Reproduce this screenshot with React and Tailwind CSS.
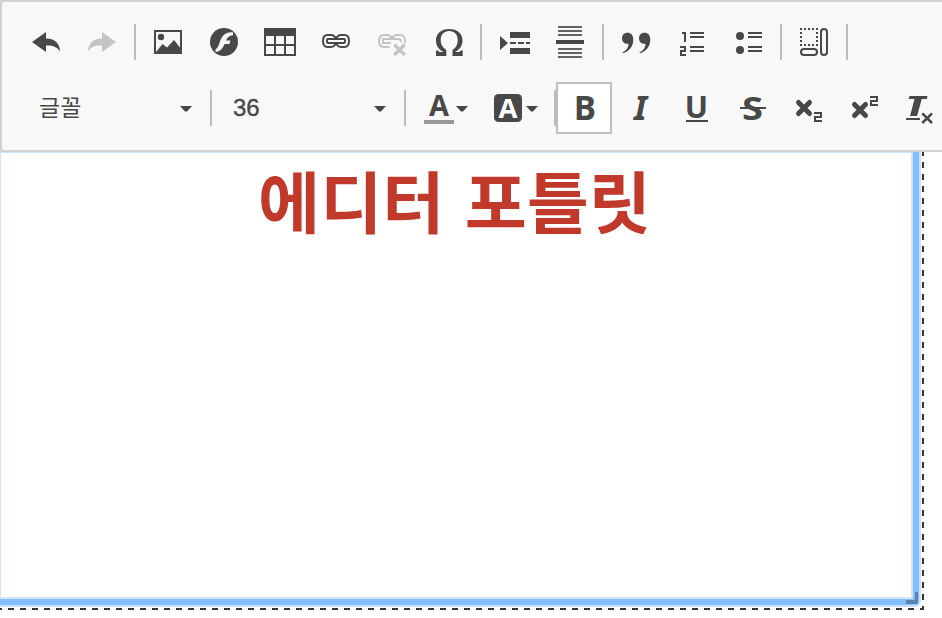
import React from "react";

const INK = "#484848";

function Icon({ x, y = 16, w = 56, className = "", label, children }) {
  return (
    <button aria-label={label} className={"block h-[52px] shrink-0 " + className}>
      <svg width={w} height="52" viewBox={`${x} ${y} ${w} 52`} fill={INK} className="block">
        {children}
      </svg>
    </button>
  );
}

function Sep() {
  return <span className="mx-1 h-9 w-0.5 shrink-0 bg-[#bcbcbc]" />;
}

function Caret({ className = "" }) {
  return (
    <svg width="12" height="6" viewBox="0 0 12 6" className={"shrink-0 " + className} fill={INK}>
      <path d="M0 0H12L7 5.5H5Z" />
    </svg>
  );
}

function Glyph({ x, y, size, italic, fill = INK, length, children }) {
  return (
    <text x={x} y={y} fontSize={size} fill={fill} fontWeight="700" fontStyle={italic ? "italic" : "normal"} textLength={length} lengthAdjust="spacingAndGlyphs" className="font-['Open_Sans','Noto_Sans',sans-serif]">
      {children}
    </text>
  );
}

function Digit({ x, y, children }) {
  return (
    <g transform={`translate(${x} ${y})`} fill="none" stroke={INK} strokeWidth="2">
      {children}
    </g>
  );
}

function TopRow() {
  return (
    <div className="flex h-[52px] items-center">
      <Icon x={18} label="Undo">
        <path d="M32 42 46 32V38.500C54 38.500 60 43 60 51.500C57 46.500 52 45 46 45.500V52Z" />
      </Icon>
      <Icon x={74} label="Redo">
        <path fill="#c4c4c4" d="M116 42 102 32V38.500C94 38.500 88 43 88 51.500C91 46.500 96 45 102 45.500V52Z" />
      </Icon>
      <Sep />
      <Icon x={140} label="Image">
        <path fillRule="evenodd" d="M154 30H182V54H154ZM156 32V52L162.500 44 167 47.500 174 40 180 47.500V32Z" />
        <circle cx="161" cy="37" r="3.200" />
      </Icon>
      <Icon x={196} label="Flash">
        <circle cx="224" cy="42" r="14" />
        <path fill="#f8f8f8" d="M233 32.200C225 31.500 221.500 36 219.500 43C218.600 46 217.500 48 215.500 49.600V52C221 51.500 223 47.500 224.500 44H229.500L230.500 40.500H226C227.400 37.200 229.500 35.800 233 35.300Z" />
      </Icon>
      <Icon x={252} label="Table">
        <path fillRule="evenodd" d="M264 28H296V56H264ZM266 36V44H274V36ZM276 36V44H284V36ZM286 36V44H294V36ZM266 46V54H274V46ZM276 46V54H284V46ZM286 46V54H294V46Z" />
      </Icon>
      <Icon x={308} label="Link">
        <g fill="none" stroke={INK} strokeWidth="2">
          <path d="M335 39V37C334 35.500 333 35 331 35H327.500C324.500 35 323 37 323 41S324.500 47 327.500 47H331C333 47 334 46.500 335 45V43" />
          <path d="M337 39V37C338 35.500 339 35 341 35H344.500C347.500 35 349 37 349 41S347.500 47 344.500 47H341C339 47 338 46.500 337 45V43" />
          <rect x="327" y="39" width="18" height="4" rx="1" />
        </g>
      </Icon>
      <Icon x={364} label="Unlink">
        <g fill="none" stroke="#c4c4c4" strokeWidth="2">
          <path d="M391 39V37C390 35.500 389 35 387 35H383.500C380.500 35 379 37 379 41S380.500 47 383.500 47H389.500" />
          <path d="M393 39V37C394 35.500 395 35 397 35H400.500C403.500 35 405 37 405 41V43M391 43H383V39H398.500Q401 39 401 42" />
          <path strokeWidth="3.200" d="m394.300 44.500 10.500 10.500m0-10.500-10.500 10.500" />
        </g>
      </Icon>
      <Icon x={420} label="Special character">
        <path d="M436 56V50.500H438L439 52H443.500C438.500 49.500 436 45.500 436 40.500C436 33.500 441.200 29 449.200 29S462.500 33.500 462.500 40.500C462.500 45.500 460 49.500 455 52H459.500L460.500 50.500H462.700V56H452.500V50C456.300 47.500 457.700 44.500 457.700 40.200C457.700 34.500 454.500 31 449.200 31S440.700 34.500 440.700 40.200C440.700 44.500 442.500 47.500 446.300 50V56Z" />
      </Icon>
      <Sep />
      <Icon x={486} label="Page break">
        <path d="M500 36 508 43 500 50ZM510 32H530V38H510ZM510 48H530V54H510ZM510 42H516V44H510ZM518 42H524V44H518ZM526 42H530V44H526Z" />
      </Icon>
      <Icon x={542} label="Horizontal line">
        <path fill="#636363" d="M558 26H582V28H558ZM558 30H582V32H558ZM558 34H582V36H558ZM558 48H582V50H558ZM558 52H582V54H558ZM558 56H582V58H558Z" />
        <path d="M556 40H584V44H556Z" />
      </Icon>
      <Sep />
      <Icon x={608} label="Quote">
        <path d="M622.500 52.500C626.500 50.200 628.500 47.500 628.500 44C624.500 44 622 42 622 38.300C622 35 624.300 32.800 627.500 32.800C631 32.800 633.300 35.300 633.300 39.500C633.300 46 629.500 51.500 622.800 53.300Z" />
        <path d="M639.500 52.500C643.500 50.200 645.500 47.500 645.500 44C641.500 44 639 42 639 38.300C639 35 641.300 32.800 644.500 32.800C648 32.800 650.300 35.300 650.300 39.500C650.300 46 646.500 51.500 639.800 53.300Z" />
      </Icon>
      <Icon x={664} label="Numbered list">
        <path d="M690 32H704V34H690ZM690 36H704V38H690ZM690 46H704V48H690ZM690 50H704V52H690Z" />
        <Digit x={680} y={32}>
          <path d="M2 1H5V10" />
          <path d="M0 15H5V19H1V23H6" />
        </Digit>
      </Icon>
      <Icon x={720} label="Bulleted list">
        <circle cx="740" cy="36" r="4" />
        <circle cx="740" cy="50" r="4" />
        <path d="M748 32H762V34H748ZM748 36H762V38H748ZM748 46H762V48H748ZM748 50H762V52H748Z" />
      </Icon>
      <Sep />
      <Icon x={786} label="Show blocks">
        <g fill="none" stroke={INK} strokeWidth="2">
          <path strokeDasharray="2 2" d="M800 29H818M800 45H818M801 32V44M817 32V44" />
          <rect x="801" y="49" width="16" height="6" rx="3" />
          <rect x="821" y="29" width="6" height="26" rx="3" />
        </g>
      </Icon>
      <Sep />
    </div>
  );
}

function FormatRow() {
  return (
    <div className="flex h-[52px] items-center">
      <button className="flex h-[52px] w-[188px] shrink-0 items-center justify-between pl-[21px] pr-3.5 text-[#484848]">
        <span className="pb-1 font-['Noto_Sans_CJK_KR',sans-serif] text-[23px] leading-[32px]">글꼴</span>
        <Caret className="mt-0.5" />
      </button>
      <Sep />
      <button className="flex h-[52px] w-[184px] shrink-0 items-center justify-between pl-[17px] pr-3.5 text-[#484848]">
        <span className="font-['Liberation_Sans',sans-serif] text-2xl [-webkit-text-stroke:0.4px_#484848]">36</span>
        <Caret className="mt-0.5" />
      </button>
      <Sep />
      <Icon x={410} y={82} w={70} label="Text colour">
        <Glyph x={429} y={116} size={28} length={20}>A</Glyph>
        <path fill="#999" d="M424 120H454V124H424Z" />
        <path d="M456 106H468L463 111.500H461Z" />
      </Icon>
      <Icon x={480} y={82} w={70} label="Background colour">
        <rect x="494" y="94" width="28" height="28" rx="4.500" />
        <Glyph x={498.500} y={118} size={27} length={19} fill="#fff">A</Glyph>
        <path d="M526 106H538L533 111.500H531Z" />
      </Icon>
      <span className="ml-1 h-9 w-0.5 shrink-0 bg-[#bcbcbc]" />
      <Icon x={558} y={84} w={52} label="Bold" className="w-14 overflow-hidden border-2 border-[#bcbcbc] bg-white">
        <Glyph x={573.800} y={120} size={33.500} length={22.300}>B</Glyph>
      </Icon>
      <Icon x={612} y={82} label="Italic">
        <text x="634" y="120" fontSize="33.500" fontWeight="700" fontStyle="italic" className="font-['Noto_Sans',sans-serif]">I</text>
      </Icon>
      <Icon x={668} y={82} label="Underline">
        <Glyph x={684.800} y={117.500} size={31} length={23.300}>U</Glyph>
        <path d="M686 120H708V122H686Z" />
      </Icon>
      <Icon x={724} y={82} label="Strike">
        <Glyph x={742} y={119.500} size={33} length={21}>S</Glyph>
        <path d="M740 107H766V109H740Z" />
      </Icon>
      <Icon x={780} y={82} label="Subscript">
        <path fill="none" stroke={INK} strokeWidth="5" strokeLinecap="round" d="m798.500 102.500 11 11m0-11-11 11" />
        <Digit x={814} y={112}>
          <path d="M0 1H7V5H1V9H8" />
        </Digit>
      </Icon>
      <Icon x={836} y={82} label="Superscript">
        <path fill="none" stroke={INK} strokeWidth="5" strokeLinecap="round" d="m854.500 104.500 11 11m0-11-11 11" />
        <Digit x={870} y={96}>
          <path d="M0 1H7V5H1V9H8" />
        </Digit>
      </Icon>
      <Icon x={892} y={82} label="Remove format">
        <path d="M909.500 96H927.500L926.800 99H921.800L917 116H910L914.500 99H908.800ZM906 118H920V120H906Z" />
        <path fill="none" stroke={INK} strokeWidth="2.500" d="m922.300 113.300 9.700 9.700m0-9.700-9.700 9.700" />
      </Icon>
    </div>
  );
}

export default function App() {
  return (
    <div className="flex h-[618px] w-[942px] flex-col overflow-hidden bg-white">
      <div className="flex h-[152px] w-full shrink-0 flex-col gap-3.5 overflow-hidden border-y-2 border-l-2 border-[#d1d1d1] bg-[#f8f8f8] pl-4 pt-3.5">
        <TopRow />
        <FormatRow />
      </div>
      <div className="relative h-[458px] w-[924px] shrink-0 pb-[3px] pr-[3px]">
        <div className="h-full w-[921px] rounded-br-[6px] bg-[#c9e3ff] pb-px pr-0.5">
          <div className="h-[453px] w-[919px] rounded-br-[4px] bg-[#85beff]">
            <div className="h-[447px] w-[913px] bg-[#cde5fc] pl-px pt-px">
              <div className="h-[444px] w-[910px] bg-white">
                <h1 className="flex justify-center whitespace-nowrap pr-[3px] font-['Noto_Sans_CJK_KR',sans-serif] text-[67.5px] font-bold leading-[92px] text-[#c0392b] [word-spacing:5px]">
                  에디터 포틀릿
                </h1>
              </div>
            </div>
          </div>
        </div>
        <span className="absolute bottom-[6px] right-[6px] h-3 w-3 rounded-br-[2px] border-b-4 border-r-[3px] border-[#5b84b1]" />
        <span className="absolute bottom-0 left-0 h-0.5 w-[924px] bg-[repeating-linear-gradient(90deg,#333_0_2px,transparent_2px_8px,#333_8px_12px)] bg-white [background-position:0_0] [background-size:12px_2px]" />
        <span className="absolute right-0 top-0 h-[458px] w-0.5 bg-[repeating-linear-gradient(180deg,#333_0_4px,transparent_4px_10px,#333_10px_12px)] bg-white" />
      </div>
    </div>
  );
}
